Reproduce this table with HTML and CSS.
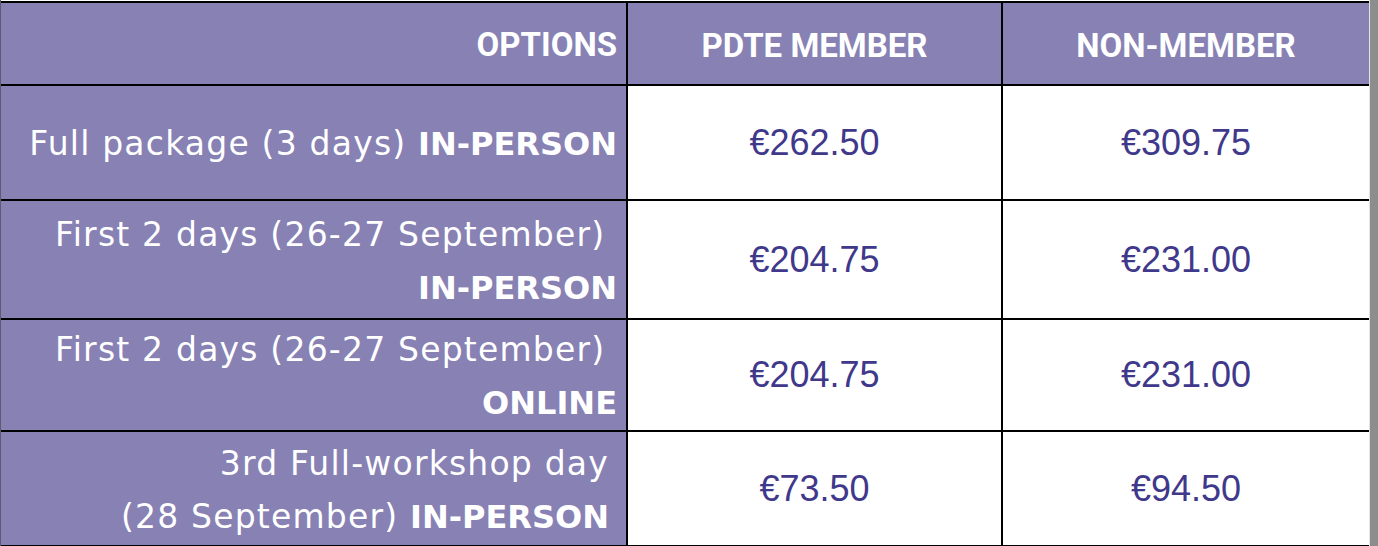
FILE: index.html
```html
<!DOCTYPE html>
<html lang="en">
<head>
<meta charset="utf-8">
<title>Registration fees</title>
<link rel="stylesheet" href="styles.css">
</head>
<body>
<div class="page">
  <div class="sheet">
    <table class="prices">
      <colgroup><col class="c1"><col class="c2"><col class="c3"></colgroup>
      <thead>
        <tr class="head">
          <th class="opt">OPTIONS</th>
          <th class="col">PDTE MEMBER</th>
          <th class="col">NON-MEMBER</th>
        </tr>
      </thead>
      <tbody>
        <tr class="r1">
          <th class="opt">Full package (3 days) <b>IN-PERSON</b></th>
          <td>€262.50</td>
          <td>€309.75</td>
        </tr>
        <tr class="r2">
          <th class="opt">First 2 days (26-27 September)&nbsp;<br><b>IN-PERSON</b></th>
          <td>€204.75</td>
          <td>€231.00</td>
        </tr>
        <tr class="r3">
          <th class="opt">First 2 days (26-27 September)&nbsp;<br><b>ONLINE</b></th>
          <td>€204.75</td>
          <td>€231.00</td>
        </tr>
        <tr class="r4">
          <th class="opt wide">3rd Full-workshop day<br>(28 September) <b>IN-PERSON</b></th>
          <td>€73.50</td>
          <td>€94.50</td>
        </tr>
      </tbody>
    </table>
  </div>
  <div class="edge"></div>
</div>
</body>
</html>
```
FILE: styles.css
```css
body {
  margin: 0;
  background: #ffffff;
}

.page {
  display: flex;
  width: 1378px;
  height: 546px;
  overflow: hidden;
}

.sheet {
  width: 1369px;
  flex: none;
  box-sizing: border-box;
  border-left: 1px solid #5e5b72;
  padding-top: 1px;
}

.edge {
  flex: 1;
  background: #8d8d8d;
  border-left: 1px solid #e2e2e2;
}

.prices {
  width: 1368px;
  table-layout: fixed;
  border-collapse: separate;
  border-spacing: 0;
  border-top: 2px solid #000;
}

.c1 { width: 625px; }
.c2 { width: 375px; }
.c3 { width: 368px; }

.prices th,
.prices td {
  padding: 0;
  border-bottom: 2px solid #000;
  vertical-align: middle;
}

.prices th + th,
.prices th + td,
.prices td + td {
  border-left: 2px solid #000;
}

.head { height: 83px; }
.r1 { height: 115px; }
.r2 { height: 119px; }
.r3 { height: 111px; }
.r4 { height: 115px; }

.head th {
  background: #8781b4;
  color: #ffffff;
  font-family: Roboto, "DejaVu Sans", sans-serif;
  font-weight: 700;
  font-size: 33px;
  line-height: 40px;
  letter-spacing: 0;
  text-align: center;
  padding-top: 5px;
}

.head th.opt {
  text-align: right;
  padding-right: 9px;
}

.opt {
  background: #8781b4;
  color: #ffffff;
  font-family: "DejaVu Sans", sans-serif;
  font-weight: 400;
  font-size: 33px;
  line-height: 53px;
  letter-spacing: 1.2px;
  text-align: right;
  padding: 3px 9px 0 0 !important;
}

.opt b {
  font-size: 32px;
  font-weight: 700;
  letter-spacing: 0;
}

.opt.wide {
  padding-right: 17px !important;
}

.prices td {
  background: #ffffff;
  color: #40388a;
  font-family: "Liberation Sans", Arial, sans-serif;
  font-size: 36px;
  text-align: center;
}
```
